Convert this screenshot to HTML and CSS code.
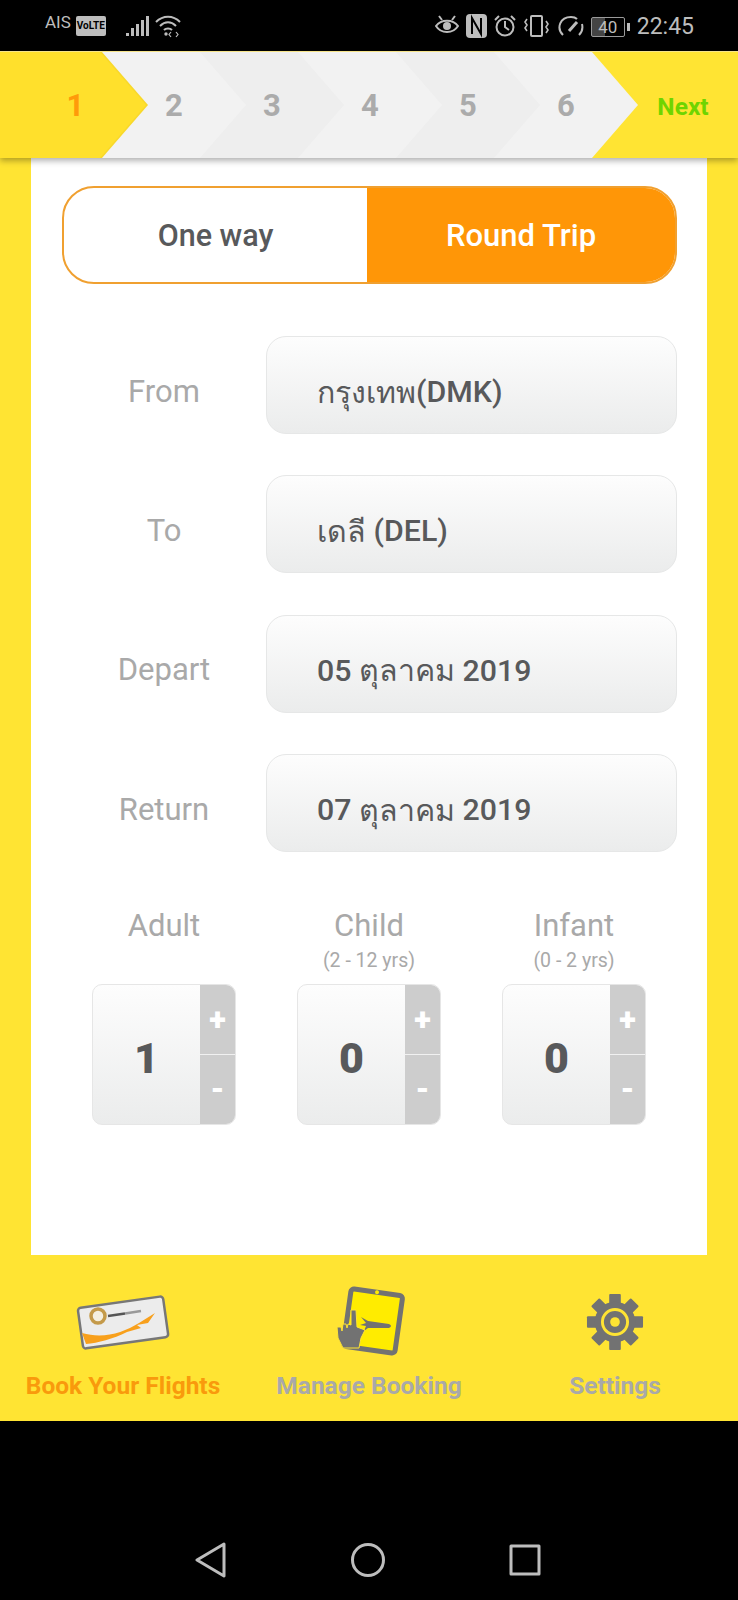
FILE: index.html
```html
<!DOCTYPE html>
<html lang="th">
  <head>
    <meta charset="UTF-8" />
    <meta name="viewport" content="width=device-width, initial-scale=1.0" />
    <title>Book Your Flights</title>
    <link rel="stylesheet" href="styles.css">
  </head>
  <body>
    <div class="status-bar">
      <div class="status-left">
        <span class="carrier">AIS</span>
        <span class="volte">VoLTE</span>
        <svg class="signal" width="24" height="24" viewBox="0 0 24 24" fill="#bdbdbd">
          <rect x="0" y="19" width="3" height="3"/>
          <rect x="5" y="14" width="3" height="8"/>
          <rect x="10" y="10" width="3" height="12"/>
          <rect x="15" y="6" width="3" height="16"/>
          <rect x="20" y="2" width="3" height="20"/>
        </svg>
        <svg class="wifi" width="26" height="24" viewBox="0 0 26 24" fill="none" stroke="#bdbdbd" stroke-width="2">
          <path d="M1 8 C8 1 18 1 25 8"/>
          <path d="M5 12 C10 7 16 7 21 12"/>
          <path d="M9 16 C11 14 15 14 17 16"/>
          <circle cx="11" cy="20" r="1.7" fill="#bdbdbd" stroke="none"/>
          <path d="M16 18 l-2 2.5 l2 2.5 M21 18 l2 2.5 l-2 2.5" stroke-width="1.2"/>
        </svg>
      </div>
      <div class="status-right">
        <svg width="24" height="22" viewBox="0 0 24 22" fill="none" stroke="#bdbdbd" stroke-width="2">
          <path d="M1 12 C6 5 18 5 23 12 C18 20 6 20 1 12Z"/>
          <circle cx="12" cy="12" r="4" fill="#bdbdbd" stroke="none"/>
          <path d="M4 2 l3 4 M20 2 l-3 4"/>
        </svg>
        <svg width="21" height="24" viewBox="0 0 21 24">
          <rect width="21" height="24" rx="4" fill="#bdbdbd"/>
          <path d="M6 20 V4 L15 20 V4" fill="none" stroke="#000" stroke-width="2"/>
        </svg>
        <svg width="22" height="23" viewBox="0 0 22 23" fill="none" stroke="#bdbdbd" stroke-width="2">
          <circle cx="11" cy="13" r="8.5"/>
          <path d="M11 7 V13 L15 16 M1 6 L5 2 M21 6 L17 2"/>
        </svg>
        <svg width="27" height="24" viewBox="0 0 27 24" fill="none" stroke="#bdbdbd" stroke-width="2">
          <rect x="8" y="2" width="11" height="20" rx="1"/>
          <path d="M4 5 L2 8 L4 11 L2 14 L4 17 M23 7 L25 10 L23 13 L25 16 L23 19" stroke-width="1.6"/>
        </svg>
        <svg width="27" height="24" viewBox="0 0 27 24" fill="none" stroke="#bdbdbd" stroke-width="2">
          <path d="M6 21 C-1 14 3 3 14 3 C17 3 19 4 20 5"/>
          <path d="M25 10 C26 14 25 18 22 21"/>
          <path d="M12 17 L20 8" stroke-width="3"/>
        </svg>
        <div class="battery"><span class="battery-level">40</span></div>
        <span class="clock">22:45</span>
      </div>
    </div>

    <div class="wizard">
      <div class="step step-active"><span>1</span></div>
      <div class="step step-light"><span>2</span></div>
      <div class="step step-dark"><span>3</span></div>
      <div class="step step-light"><span>4</span></div>
      <div class="step step-dark"><span>5</span></div>
      <div class="step step-light"><span>6</span></div>
      <div class="next">Next</div>
    </div>

    <div class="page">
      <div class="card">
        <div class="trip-toggle">
          <div class="trip-option">One way</div>
          <div class="trip-option active">Round Trip</div>
        </div>

        <div class="fields">
          <div class="field-row">
            <div class="field-label">From</div>
            <div class="field-box"><span class="thai">กรุงเทพ</span>(DMK)</div>
          </div>
          <div class="field-row">
            <div class="field-label">To</div>
            <div class="field-box"><span class="thai">เดลี&nbsp;</span>(DEL)</div>
          </div>
          <div class="field-row">
            <div class="field-label">Depart</div>
            <div class="field-box">05&nbsp;<span class="thai">ตุลาคม</span>&nbsp;2019</div>
          </div>
          <div class="field-row">
            <div class="field-label">Return</div>
            <div class="field-box">07&nbsp;<span class="thai">ตุลาคม</span>&nbsp;2019</div>
          </div>
        </div>

        <div class="passengers">
          <div class="passenger">
            <div class="passenger-name">Adult</div>
            <div class="passenger-age"></div>
            <div class="counter">
              <div class="counter-value">1</div>
              <div class="counter-buttons">
                <div class="counter-btn">+</div>
                <div class="counter-btn">-</div>
              </div>
            </div>
          </div>
          <div class="passenger">
            <div class="passenger-name">Child</div>
            <div class="passenger-age">(2 - 12 yrs)</div>
            <div class="counter">
              <div class="counter-value">0</div>
              <div class="counter-buttons">
                <div class="counter-btn">+</div>
                <div class="counter-btn">-</div>
              </div>
            </div>
          </div>
          <div class="passenger">
            <div class="passenger-name">Infant</div>
            <div class="passenger-age">(0 - 2 yrs)</div>
            <div class="counter">
              <div class="counter-value">0</div>
              <div class="counter-buttons">
                <div class="counter-btn">+</div>
                <div class="counter-btn">-</div>
              </div>
            </div>
          </div>
        </div>
      </div>

      <div class="tabs">
        <div class="tab tab-active">
          <div class="tab-icon">
            <svg width="100" height="66" viewBox="0 0 100 66">
              <g transform="rotate(-8 50 33)">
                <rect x="7" y="13" width="86" height="41" rx="3" fill="#ececec" stroke="#777" stroke-width="2.5"/>
              </g>
              <path d="M9 44 C30 50 50 44 66 34 L82 24 L75 34 L64 36 L68 39 L54 43 C40 50 25 54 13 55Z" fill="#f8a01c"/>
              <circle cx="25" cy="27" r="7" fill="#f4efe0" stroke="#c49a4a" stroke-width="3.5"/>
              <path d="M35 27 L52 24.5" stroke="#555" stroke-width="2.5"/>
              <path d="M52 24.5 L68 22" stroke="#999" stroke-width="2.5"/>
            </svg>
          </div>
          <div class="tab-label">Book Your Flights</div>
        </div>
        <div class="tab">
          <div class="tab-icon">
            <svg width="76" height="76" viewBox="0 0 76 76">
              <g transform="rotate(8 42 37)">
                <rect x="16" y="8" width="52" height="58" rx="3" fill="#ffec00" stroke="#727272" stroke-width="5"/>
                <circle cx="42" cy="8" r="2" fill="#ffec00"/>
              </g>
              <path d="M30 33 L37 37 L58 40 Q62 42 58 44 L37 44 L33 47 L35 42 L29 41 L35 39Z" fill="#727272"/>
              <path d="M20 26 L25 26 L26 43 L34 46 L30 54 L28 64 L12 64 L7 54 L6 43 L10 43 L11 47 L12 40 L15 40 L16 44 L17 40 L20 41Z" fill="#727272" stroke="#ffe433"/>
            </svg>
          </div>
          <div class="tab-label">Manage Booking</div>
        </div>
        <div class="tab">
          <div class="tab-icon">
            <svg width="58" height="58" viewBox="0 0 60 60">
              <g fill="#727272">
                <rect x="24" y="1" width="12" height="58" rx="1"/>
                <rect x="24" y="1" width="12" height="58" rx="1" transform="rotate(45 30 30)"/>
                <rect x="24" y="1" width="12" height="58" rx="1" transform="rotate(90 30 30)"/>
                <rect x="24" y="1" width="12" height="58" rx="1" transform="rotate(135 30 30)"/>
                <circle cx="30" cy="30" r="21"/>
              </g>
              <circle cx="30" cy="30" r="13" fill="#727272" stroke="#ffe433" stroke-width="3"/>
              <circle cx="30" cy="30" r="5" fill="#ffe433"/>
            </svg>
          </div>
          <div class="tab-label">Settings</div>
        </div>
      </div>
    </div>

    <div class="nav-bar">
      <svg width="32" height="36" viewBox="0 0 32 36" fill="none" stroke="#bdbdbd" stroke-width="3" stroke-linejoin="round">
        <path d="M29 2 L2 18 L29 34Z"/>
      </svg>
      <svg width="36" height="36" viewBox="0 0 36 36" fill="none" stroke="#bdbdbd" stroke-width="3">
        <circle cx="18" cy="18" r="15.5"/>
      </svg>
      <svg width="32" height="32" viewBox="0 0 32 32" fill="none" stroke="#bdbdbd" stroke-width="3" stroke-linejoin="round">
        <rect x="2" y="2" width="28" height="28"/>
      </svg>
    </div>
  </body>
</html>
```

FILE: styles.css
```css
* {
  margin: 0;
  padding: 0;
  box-sizing: border-box;
}

body {
  font-family: Roboto, "Noto Sans", sans-serif;
  background: #000;
  width: 738px;
  height: 1600px;
  overflow: hidden;
}

/* status bar */
.status-bar {
  height: 51px;
  display: flex;
  justify-content: space-between;
  padding: 10px 44px 0 45px;
  color: #bdbdbd;
}

.status-left,
.status-right {
  display: flex;
  align-items: flex-start;
}

.carrier {
  font-size: 17px;
  line-height: 28px;
  margin-top: -2px;
}

.volte {
  width: 30px;
  height: 20px;
  margin: 6px 0 0 5px;
  background: #bdbdbd;
  color: #000;
  border-radius: 2px;
  font-size: 10px;
  font-weight: 700;
  line-height: 20px;
  text-align: center;
}

.signal {
  margin: 4px 0 0 20px;
}

.wifi {
  margin: 4px 0 0 5px;
}

.status-right {
  gap: 7px;
  padding-top: 4px;
}

.battery {
  width: 34px;
  height: 20px;
  margin: 3px 5px 0 0;
  border: 1px solid #9a9a9a;
  border-radius: 2px;
  position: relative;
  font-size: 17px;
  line-height: 18px;
  text-align: center;
  background: linear-gradient(90deg, #444 40%, #000 40%);
}

.battery:after {
  content: '';
  position: absolute;
  right: -6px;
  top: 5px;
  width: 3px;
  height: 8px;
  background: #bdbdbd;
}

.clock {
  font-size: 23px;
  line-height: 26px;
}

/* wizard */
.wizard {
  height: 107px;
  background: #ffe433;
  border-top: 1px solid #f6e48a;
  display: flex;
  position: relative;
  z-index: 2;
  box-shadow: 0 3px 6px rgba(0, 0, 0, 0.3);
  font-weight: 700;
  font-size: 31px;
}

.step {
  width: 144px;
  margin-left: -46px;
  clip-path: polygon(0 0, calc(100% - 46px) 0, 100% 50%, calc(100% - 46px) 100%, 0 100%);
  display: flex;
  align-items: center;
  justify-content: center;
  color: #ababab;
}

.step-light {
  background: #f2f2f2;
}

.step-dark {
  background: #eeeeee;
}

.step:nth-child(1) { z-index: 6; }
.step:nth-child(2) { z-index: 5; }
.step:nth-child(3) { z-index: 4; }
.step:nth-child(4) { z-index: 3; }
.step:nth-child(5) { z-index: 2; }
.step:nth-child(6) { z-index: 1; }

.step-active {
  width: 148px;
  margin-left: 0;
  padding-left: 3px;
  background: #f8d82b;
  color: #ff9a0a;
  position: relative;
}

.step-active:before {
  content: '';
  position: absolute;
  top: 0;
  bottom: 0;
  left: 0;
  width: 146px;
  background: #ffe02c;
  clip-path: polygon(0 0, 100px 0, 100% 50%, 100px 100%, 0 100%);
}

.step-active span {
  position: relative;
}

.next {
  flex: 1;
  display: flex;
  align-items: center;
  justify-content: center;
  padding: 2px 10px 0 0;
  color: #6fd400;
  font-size: 24.5px;
}

/* main area */
.page {
  background: #ffe433;
  height: 1263px;
  padding: 0 31px;
  display: flex;
  flex-direction: column;
}

.card {
  background: #fff;
  height: 1097px;
  padding-top: 28px;
}

.trip-toggle {
  display: flex;
  height: 98px;
  margin: 0 30px 0 31px;
  border-radius: 32px;
  overflow: hidden;
  border: 2px solid #f0a030;
}

.trip-option {
  width: 303px;
  display: flex;
  align-items: center;
  justify-content: center;
  color: #58595b;
  font-size: 30.5px;
  font-weight: 500;
}

.trip-option.active {
  flex: 1;
  background: #ff9607;
  color: #fff;
  font-size: 31px;
}

.fields {
  display: flex;
  flex-direction: column;
  gap: 41.4px;
  margin: 52px 30px 0 31px;
}

.field-row {
  display: flex;
}

.field-label {
  width: 204px;
  padding-top: 12px;
  display: flex;
  align-items: center;
  justify-content: center;
  color: #a9a9a9;
  font-size: 31px;
}

.field-box {
  flex: 1;
  height: 98px;
  padding: 13px 0 0 50px;
  display: flex;
  align-items: center;
  border: 1px solid #e6e7e7;
  border-radius: 20px;
  background: linear-gradient(#fdfdfd, #ebecec);
  color: #58595b;
  font-size: 30.3px;
  font-weight: 500;
  font-family: Roboto, "Noto Sans", "DejaVu Sans", sans-serif;
}

.thai {
  font-weight: 400;
}

.passengers {
  display: flex;
  margin: 56px 0 0 61px;
  gap: 61px;
}

.passenger {
  width: 144px;
  text-align: center;
}

.passenger-name {
  color: #a9a9a9;
  font-size: 31px;
  line-height: 36px;
}

.passenger-age {
  color: #a9a9a9;
  font-size: 19.5px;
  height: 24px;
  line-height: 24px;
  margin-top: 5px;
}

.counter {
  display: flex;
  height: 141px;
  margin-top: 11px;
  border: 1px solid #e6e6e6;
  border-radius: 10px;
  overflow: hidden;
  background: linear-gradient(#fdfdfd, #ebecec);
}

.counter-value {
  flex: 1;
  display: flex;
  align-items: center;
  justify-content: center;
  padding-top: 6px;
  color: #58595b;
  font-size: 43px;
  font-weight: 900;
}

.counter-buttons {
  width: 35px;
  display: flex;
  flex-direction: column;
  gap: 1px;
  background: #f1f1f1;
}

.counter-btn {
  flex: 1;
  display: flex;
  align-items: center;
  justify-content: center;
  background: #cdcdcd;
  color: #fff;
  font-size: 31px;
  font-weight: 900;
}

/* bottom tabs */
.tabs {
  flex: 1;
  display: grid;
  grid-template-columns: repeat(3, 246px);
  margin: 0 -31px;
}

.tab {
  display: flex;
  flex-direction: column;
  align-items: center;
  padding-top: 27px;
}

.tab-icon {
  height: 80px;
  display: flex;
  align-items: center;
  justify-content: center;
}

.tab-label {
  margin-top: 8px;
  color: #a9a9a9;
  font-size: 24.5px;
  font-weight: 700;
  line-height: 32px;
}

.tab-active .tab-label {
  color: #f99a0c;
}

/* system nav */
.nav-bar {
  height: 179px;
  display: flex;
  justify-content: space-between;
  align-items: center;
  padding: 99px 197px 0 195px;
}
```
